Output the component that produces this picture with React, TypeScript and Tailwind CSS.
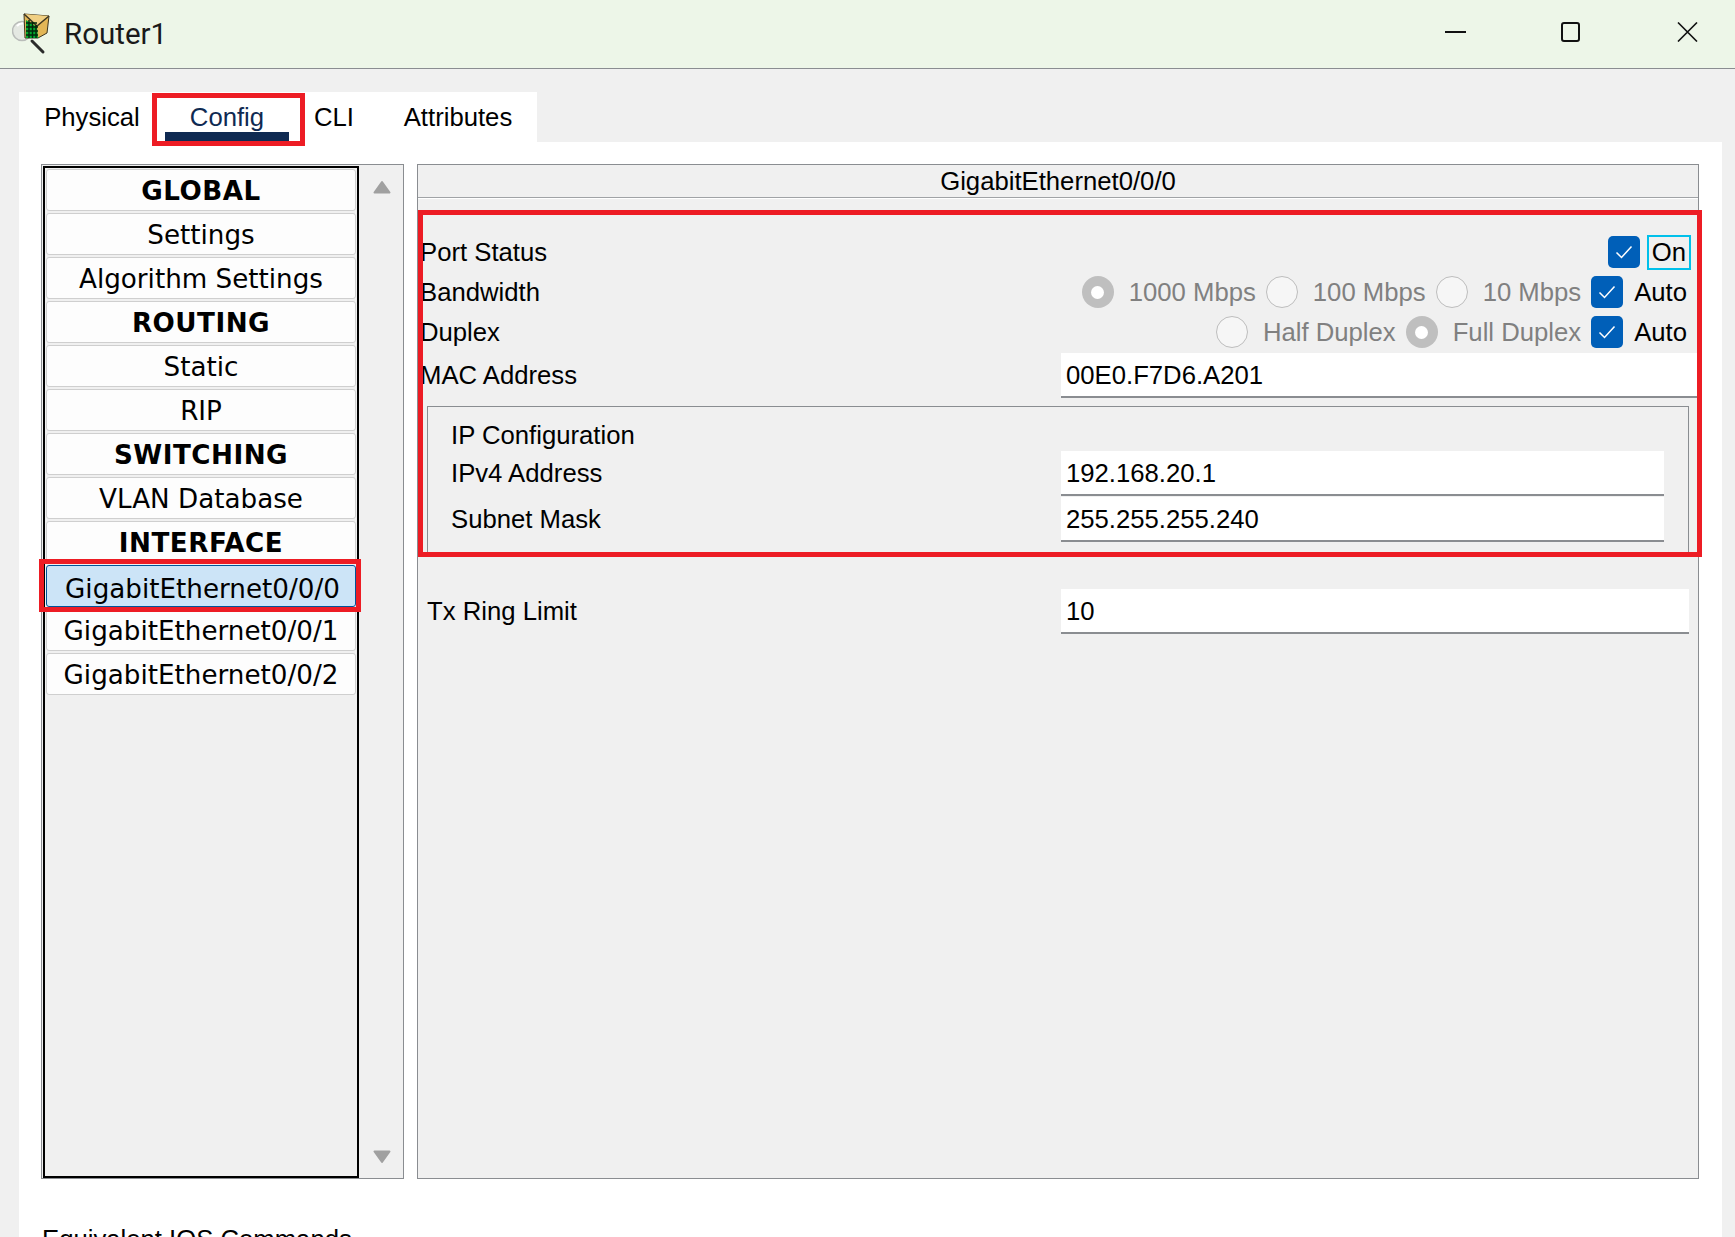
import React from 'react';

const menu = [
    { label: 'GLOBAL', bold: true },
    { label: 'Settings' },
    { label: 'Algorithm Settings' },
    { label: 'ROUTING', bold: true },
    { label: 'Static' },
    { label: 'RIP' },
    { label: 'SWITCHING', bold: true },
    { label: 'VLAN Database' },
    { label: 'INTERFACE', bold: true },
    { label: 'GigabitEthernet0/0/0', selected: true },
    { label: 'GigabitEthernet0/0/1' },
    { label: 'GigabitEthernet0/0/2' },
];

function RouterIcon() {
    return (
        <svg width="40" height="44" viewBox="0 0 40 44" className="shrink-0">
            <circle cx="10" cy="19" r="9.5" fill="#e4e8e2" stroke="#b9bcb9" strokeWidth="1.5" />
            <path d="M5 14a7 7 0 0 1 6-2.5" fill="none" stroke="#ffffff" strokeWidth="2" />
            <path d="M20 29 L31 40" stroke="#2b2b2b" strokeWidth="3" strokeLinecap="round" />
            <path d="M12 2 L37 4 L35 21 L26 26 L13 26 Z" fill="#e2b657" stroke="#3d3520" strokeWidth="1" />
            <path d="M12 2 L25 14 L37 4" fill="#f0cf82" stroke="#3d3520" strokeWidth="1.5" />
            <path d="M14 8 L25 15 L26 26 L14 26 Z" fill="#00a82d" />
            <path
                d="M14 11 H25 M14 15 H26 M14 19 H26 M14 23 H26 M17 8 V26 M20.5 10 V26 M24 13 V26"
                stroke="#03260b"
                strokeWidth="1.4"
            />
        </svg>
    );
}

function WindowButtons() {
    return (
        <div className="ml-auto flex items-center pr-[37px] pb-[4px]">
            <svg width="21" height="2" viewBox="0 0 21 2">
                <path d="M0 1 H21" stroke="#111111" strokeWidth="2" />
            </svg>
            <svg width="19" height="20" viewBox="0 0 19 20" className="ml-[95px]">
                <rect x="1" y="1" width="17" height="18" rx="2" fill="none" stroke="#111111" strokeWidth="2" />
            </svg>
            <svg width="21" height="20" viewBox="0 0 21 20" className="ml-[97px]">
                <path d="M1 0.5 L20 19.5 M20 0.5 L1 19.5" stroke="#111111" strokeWidth="1.6" />
            </svg>
        </div>
    );
}

function Checkbox() {
    return (
        <span className="flex h-[32px] w-[32px] shrink-0 items-center justify-center rounded-[5px] bg-[#005fb8]">
            <svg width="18" height="14" viewBox="0 0 18 14">
                <path d="M1.5 7.5 L6.5 12.5 L16.5 1.5" fill="none" stroke="#ffffff" strokeWidth="1.5" />
            </svg>
        </span>
    );
}

function Radio({ selected }: { selected?: boolean }) {
    if (selected) {
        return (
            <span className="flex h-[32px] w-[32px] shrink-0 items-center justify-center rounded-full bg-[#bfbfbf]">
                <span className="h-[13px] w-[13px] rounded-full bg-white" />
            </span>
        );
    }
    return <span className="h-[32px] w-[32px] shrink-0 rounded-full border border-[#bdbdbd] bg-[#f6f6f6]" />;
}

function RadioOption({ label, selected }: { label: string; selected?: boolean }) {
    return (
        <div className="flex items-center gap-[15px]">
            <Radio selected={selected} />
            <span className="text-[#808080]">{label}</span>
        </div>
    );
}

function AutoCheck() {
    return (
        <div className="flex items-center gap-[11px]">
            <Checkbox />
            <span>Auto</span>
        </div>
    );
}

function TextField({ value, className }: { value: string; className: string }) {
    return (
        <div className={`flex h-[45px] items-center border-b-2 border-[#8a8d91] bg-white pl-[5px] ${className}`}>
            {value}
        </div>
    );
}

export default function App() {
    return (
        <div className="flex h-[1237px] w-full flex-col overflow-hidden bg-[#f0f0f0] font-['Liberation_Sans',Arial,sans-serif] text-[25.7px] leading-[32px] text-black">
            {/* Title bar */}
            <div className="flex h-[69px] shrink-0 items-center border-b border-[#8a8d91] bg-[#edf6e8] pl-[12px]">
                <RouterIcon />
                <span className="ml-[12px] font-['Roboto',sans-serif] text-[29.5px] text-[#1a1a1a]">Router1</span>
                <WindowButtons />
            </div>

            {/* Tabs */}
            <div className="ml-[19px] mt-[23px] flex h-[50px] w-[518px] shrink-0 bg-white">
                <div className="w-[146px] pt-[9px] text-center">Physical</div>
                <div className="relative h-[49px] w-[124px] border-b-[9px] border-[#0f2a52] pt-[9px] text-center text-[#0f2a52]">
                    Config
                    <div className="pointer-events-none absolute left-[-13px] top-[1px] h-[53px] w-[153px] border-[5px] border-[#ed1c24]" />
                </div>
                <div className="w-[90px] pt-[9px] text-center">CLI</div>
                <div className="w-[158px] pt-[9px] text-center">Attributes</div>
            </div>

            {/* Config page */}
            <div className="ml-[19px] w-[1703px] flex-1 bg-white px-[22px] pt-[22px]">
                <div className="flex h-[1015px] gap-[13px]">
                    {/* Left menu */}
                    <div className="relative flex w-[363px] border border-[#8a8d91] bg-[#f0f0f0] pl-[1px] pt-[1px] font-['DejaVu_Sans',sans-serif] text-[26.2px]">
                        <div className="flex w-[316px] flex-col gap-[2px] border-2 border-black pl-[1px] pr-[1px] pt-[1px]">
                            {menu.map((item) => (
                                <div
                                    key={item.label}
                                    className={
                                        item.selected
                                            ? 'flex h-[42px] items-center justify-center rounded-[3px] border border-[#005499] bg-[#cce4f7] pl-[3px] pt-[5px]'
                                            : `flex h-[42px] items-center justify-center rounded-[3px] border border-[#cfcfcf] bg-[#fdfdfd] pt-[2px] ${item.bold ? 'font-bold tracking-[0.5px]' : ''}`
                                    }
                                >
                                    {item.label}
                                </div>
                            ))}
                        </div>
                        <div className="flex flex-1 flex-col items-center justify-between pb-[14px] pl-[1px] pt-[14px]">
                            <svg width="18" height="14" viewBox="0 0 18 14">
                                <path d="M9 2 L16.5 12.5 H1.5 Z" fill="#a0a0a0" stroke="#a0a0a0" strokeWidth="2" strokeLinejoin="round" />
                            </svg>
                            <svg width="18" height="14" viewBox="0 0 18 14">
                                <path d="M9 12 L16.5 1.5 H1.5 Z" fill="#a0a0a0" stroke="#a0a0a0" strokeWidth="2" strokeLinejoin="round" />
                            </svg>
                        </div>
                        <div className="pointer-events-none absolute left-[-3px] top-[394px] h-[53px] w-[322px] border-[5px] border-[#ed1c24]" />
                    </div>

                    {/* Interface panel */}
                    <div className="relative flex w-[1282px] flex-col border border-[#8a8d91] bg-[#f0f0f0]">
                        <div className="flex h-[33px] shrink-0 items-center justify-center border-b border-[#a0a3a6] shadow-[0_1px_0_#ffffff]">
                            GigabitEthernet0/0/0
                        </div>

                        <div className="mt-[34px] flex h-[40px] items-center justify-between pl-[2px] pr-[7px]">
                            <span>Port Status</span>
                            <div className="flex items-center gap-[7px]">
                                <Checkbox />
                                <span className="flex h-[35px] w-[44px] items-center justify-center border-2 border-[#00c0ea]">On</span>
                            </div>
                        </div>
                        <div className="flex h-[40px] items-center justify-between pl-[2px] pr-[11px]">
                            <span>Bandwidth</span>
                            <div className="flex items-center gap-[10px]">
                                <RadioOption label="1000 Mbps" selected />
                                <RadioOption label="100 Mbps" />
                                <RadioOption label="10 Mbps" />
                                <AutoCheck />
                            </div>
                        </div>
                        <div className="flex h-[40px] items-center justify-between pl-[2px] pr-[11px]">
                            <span>Duplex</span>
                            <div className="flex items-center gap-[10px]">
                                <RadioOption label="Half Duplex" />
                                <RadioOption label="Full Duplex" selected />
                                <AutoCheck />
                            </div>
                        </div>
                        <div className="mt-[1px] flex items-center pl-[2px]">
                            <span className="w-[641px] pb-[2px]">MAC Address</span>
                            <TextField value="00E0.F7D6.A201" className="w-[637px]" />
                        </div>

                        <div className="mx-[9px] mt-[8px] flex h-[149px] flex-col gap-[1px] border border-[#8a8d91] pl-[23px] pt-[12px]">
                            <div className="h-[31px]">IP Configuration</div>
                            <div className="flex items-center">
                                <span className="w-[610px] pb-[1px]">IPv4 Address</span>
                                <TextField value="192.168.20.1" className="w-[603px]" />
                            </div>
                            <div className="flex items-center">
                                <span className="w-[610px] pb-[2px]">Subnet Mask</span>
                                <TextField value="255.255.255.240" className="w-[603px]" />
                            </div>
                        </div>

                        <div className="ml-[9px] mt-[34px] flex items-center">
                            <span className="w-[634px] pb-[2px]">Tx Ring Limit</span>
                            <TextField value="10" className="w-[628px]" />
                        </div>

                        <div className="pointer-events-none absolute left-[0px] right-[-4px] top-[45px] h-[347px] border-[5px] border-[#ed1c24]" />
                    </div>
                </div>

                <div className="mt-[44px] pl-[1px]">Equivalent IOS Commands</div>
            </div>
        </div>
    );
}
